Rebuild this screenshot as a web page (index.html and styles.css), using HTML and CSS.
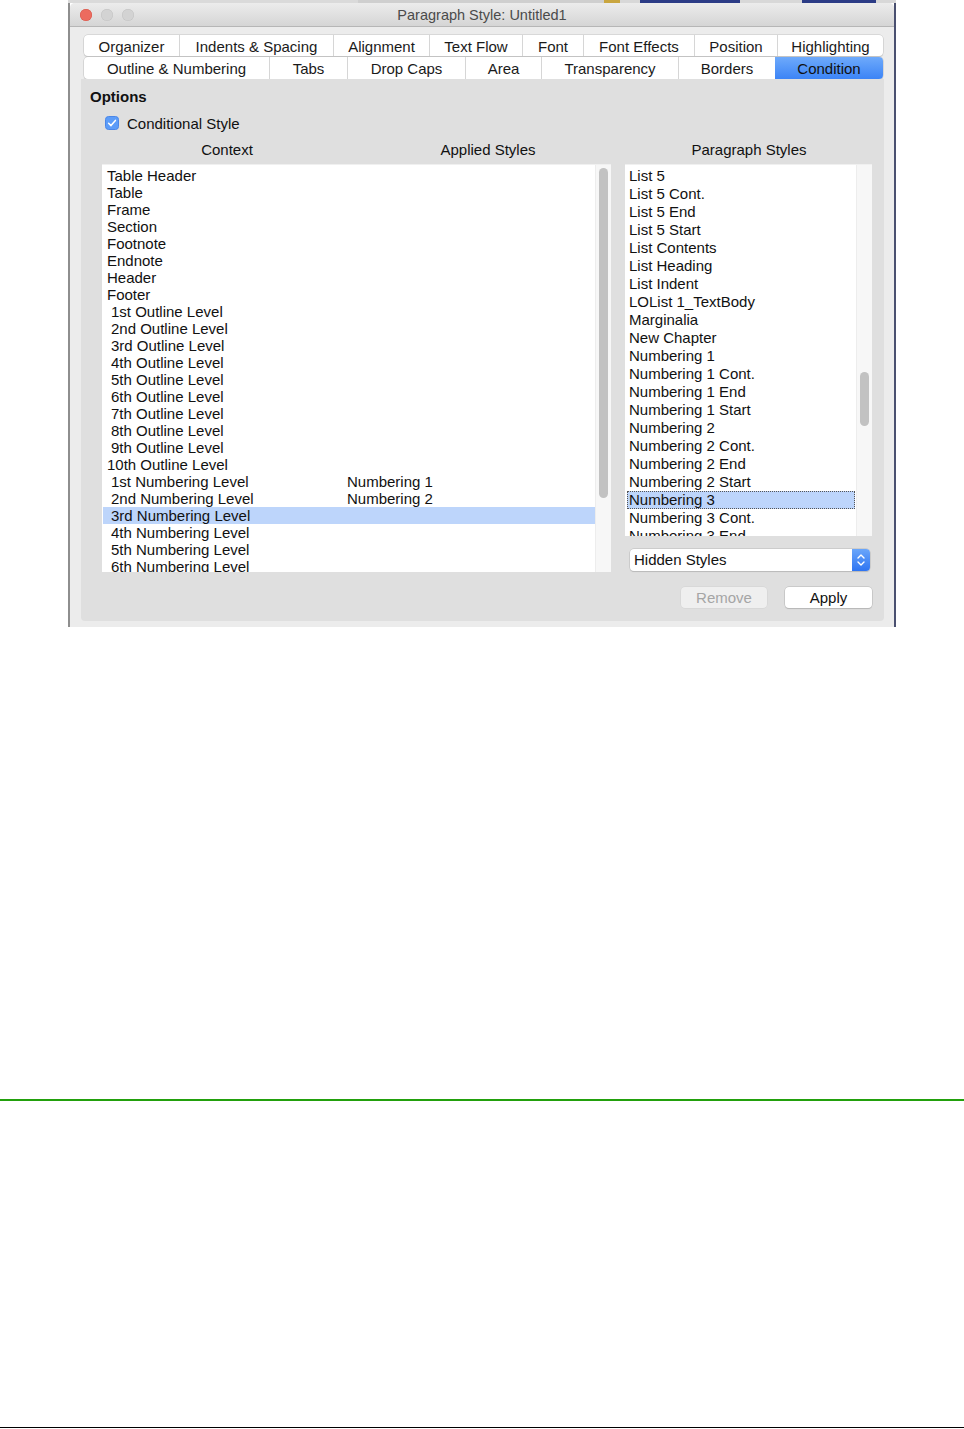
FILE: index.html
```html
<!DOCTYPE html>
<html>
<head>
<meta charset="utf-8">
<link rel="stylesheet" href="styles.css">
</head>
<body>
<div class="page">
  <div class="shot">
    <div class="desk">
      <span class="d1"></span><span class="d2"></span><span class="d3"></span><span class="d4"></span><span class="d5"></span>
    </div>
    <div class="frame">
      <div class="edge-l"></div>
      <div class="window">
        <div class="titlebar">
          <div class="lights"><span class="light red"></span><span class="light"></span><span class="light"></span></div>
          <div class="title">Paragraph Style: Untitled1</div>
          <div></div>
        </div>
        <div class="tabs">
          <div class="tabrow r1">
            <span>Organizer</span><span>Indents &amp; Spacing</span><span>Alignment</span><span>Text Flow</span><span>Font</span><span>Font Effects</span><span>Position</span><span>Highlighting</span>
          </div>
          <div class="tabrow r2">
            <span>Outline &amp; Numbering</span><span>Tabs</span><span>Drop Caps</span><span>Area</span><span>Transparency</span><span>Borders</span><span class="sel">Condition</span>
          </div>
        </div>
        <div class="panel">
          <div class="options">Options</div>
          <div class="checkrow">
            <svg class="check" width="14" height="14" viewBox="0 0 14 14"><rect x="0.5" y="0.5" width="13" height="13" rx="3" fill="#5c9cf8" stroke="#4a86e8"/><polyline points="3.6,7.2 6,9.6 10.4,4.4" fill="none" stroke="#fff" stroke-width="1.5" stroke-linecap="round" stroke-linejoin="round"/></svg>
            <span>Conditional Style</span>
          </div>
          <div class="heads">
            <span class="h1">Context</span><span class="h2">Applied Styles</span><span class="h3">Paragraph Styles</span>
          </div>
          <div class="lists">
            <div class="listbox left">
              <div class="rows">
                <div class="row"><span class="ctx">Table Header</span></div>
                <div class="row"><span class="ctx">Table</span></div>
                <div class="row"><span class="ctx">Frame</span></div>
                <div class="row"><span class="ctx">Section</span></div>
                <div class="row"><span class="ctx">Footnote</span></div>
                <div class="row"><span class="ctx">Endnote</span></div>
                <div class="row"><span class="ctx">Header</span></div>
                <div class="row"><span class="ctx">Footer</span></div>
                <div class="row"><span class="ctx in">1st Outline Level</span></div>
                <div class="row"><span class="ctx in">2nd Outline Level</span></div>
                <div class="row"><span class="ctx in">3rd Outline Level</span></div>
                <div class="row"><span class="ctx in">4th Outline Level</span></div>
                <div class="row"><span class="ctx in">5th Outline Level</span></div>
                <div class="row"><span class="ctx in">6th Outline Level</span></div>
                <div class="row"><span class="ctx in">7th Outline Level</span></div>
                <div class="row"><span class="ctx in">8th Outline Level</span></div>
                <div class="row"><span class="ctx in">9th Outline Level</span></div>
                <div class="row"><span class="ctx">10th Outline Level</span></div>
                <div class="row"><span class="ctx in">1st Numbering Level</span><span class="app">Numbering 1</span></div>
                <div class="row"><span class="ctx in">2nd Numbering Level</span><span class="app">Numbering 2</span></div>
                <div class="row hl"><span class="ctx in">3rd Numbering Level</span></div>
                <div class="row"><span class="ctx in">4th Numbering Level</span></div>
                <div class="row"><span class="ctx in">5th Numbering Level</span></div>
                <div class="row"><span class="ctx in">6th Numbering Level</span></div>
              </div>
              <div class="track"><div class="thumb tl"></div></div>
            </div>
            <div class="rightcol">
              <div class="listbox right">
                <div class="rows">
                  <div class="prow">List 5</div>
                  <div class="prow">List 5 Cont.</div>
                  <div class="prow">List 5 End</div>
                  <div class="prow">List 5 Start</div>
                  <div class="prow">List Contents</div>
                  <div class="prow">List Heading</div>
                  <div class="prow">List Indent</div>
                  <div class="prow">LOList 1_TextBody</div>
                  <div class="prow">Marginalia</div>
                  <div class="prow">New Chapter</div>
                  <div class="prow">Numbering 1</div>
                  <div class="prow">Numbering 1 Cont.</div>
                  <div class="prow">Numbering 1 End</div>
                  <div class="prow">Numbering 1 Start</div>
                  <div class="prow">Numbering 2</div>
                  <div class="prow">Numbering 2 Cont.</div>
                  <div class="prow">Numbering 2 End</div>
                  <div class="prow">Numbering 2 Start</div>
                  <div class="prow psel">Numbering 3</div>
                  <div class="prow">Numbering 3 Cont.</div>
                  <div class="prow">Numbering 3 End</div>
                </div>
                <div class="track"><div class="thumb tr"></div></div>
              </div>
              <div class="select">
                <span class="selval">Hidden Styles</span>
                <span class="stepper"><svg width="18" height="22" viewBox="0 0 18 22"><polyline points="6,9 9,6 12,9" fill="none" stroke="#fff" stroke-width="1.4" stroke-linecap="round" stroke-linejoin="round"/><polyline points="6,13 9,16 12,13" fill="none" stroke="#fff" stroke-width="1.4" stroke-linecap="round" stroke-linejoin="round"/></svg></span>
              </div>
              <div class="buttons">
                <span class="btn dis">Remove</span>
                <span class="btn">Apply</span>
              </div>
            </div>
          </div>
        </div>
      </div>
      <div class="edge-r"></div>
    </div>
  </div>
  <div class="green"></div>
  <div class="black"></div>
</div>
</body>
</html>
```
FILE: styles.css
```css
html, body {
  margin: 0;
  padding: 0;
  background: #fff;
}
body {
  font-family: "Liberation Sans", Arial, Helvetica, sans-serif;
  font-size: 15px;
  color: #111;
}
.page {
  width: 964px;
  height: 1429px;
  overflow: hidden;
}
.shot {
  margin-left: 68px;
  width: 828px;
  height: 627px;
  display: flex;
  flex-direction: column;
}
.desk {
  height: 3px;
  display: flex;
  background: #d8d8d8;
}
.desk span { display: block; height: 3px; }
.desk .d1 { width: 290px; background: #dadada; }
.desk .d2 { width: 246px; background: #cfcfcf; }
.desk .d3 { width: 16px; background: #c9a640; }
.desk .d4 { width: 100px; background: #2c3c86; margin-left: 20px; }
.desk .d5 { width: 74px; background: #2c3c86; margin-left: 62px; }
.frame {
  flex: 1;
  display: flex;
}
.edge-l {
  width: 2px;
  background: #8e8e8e;
}
.edge-r {
  width: 2px;
  background: #4a5070;
}
.window {
  width: 824px;
  background: #ececec;
  border-radius: 5px 5px 0 0;
  display: flex;
  flex-direction: column;
  overflow: hidden;
}
.titlebar {
  height: 23px;
  border-bottom: 1px solid #b6b6b6;
  background: linear-gradient(#ececec, #d5d5d5);
  display: grid;
  grid-template-columns: 1fr auto 1fr;
  align-items: center;
}
.lights {
  display: flex;
  gap: 9px;
  padding-left: 10px;
}
.light {
  width: 12px;
  height: 12px;
  border-radius: 50%;
  background: #d3d3d3;
  box-shadow: inset 0 0 0 0.5px #c2c2c2;
}
.light.red {
  background: #ec6b5f;
  box-shadow: inset 0 0 0 0.5px #d65447;
}
.title {
  font-size: 14.5px;
  color: #4b4b4b;
}
.tabs {
  padding: 8px 0 0 14px;
  display: flex;
  flex-direction: column;
  gap: 1px;
}
.tabrow {
  width: 799px;
  height: 21px;
  display: flex;
  background: #fff;
  border-radius: 4px;
  box-shadow: 0 0 0 0.5px #c4c4c4, 0 1px 1px #bdbdbd;
  overflow: hidden;
}
.tabrow span {
  flex: none;
  text-align: center;
  line-height: 23px;
  border-left: 1px solid #d6d6d6;
  box-sizing: border-box;
  color: #1a1a1a;
}
.tabrow span:first-child { border-left: none; }
.r1 span:nth-child(1) { width: 95px; }
.r1 span:nth-child(2) { width: 154px; }
.r1 span:nth-child(3) { width: 96px; }
.r1 span:nth-child(4) { width: 93px; }
.r1 span:nth-child(5) { width: 61px; }
.r1 span:nth-child(6) { width: 111px; }
.r1 span:nth-child(7) { width: 83px; }
.r1 span:nth-child(8) { width: 106px; }
.r2 span:nth-child(1) { width: 185px; }
.r2 span:nth-child(2) { width: 78px; }
.r2 span:nth-child(3) { width: 118px; }
.r2 span:nth-child(4) { width: 76px; }
.r2 span:nth-child(5) { width: 137px; }
.r2 span:nth-child(6) { width: 97px; }
.r2 span:nth-child(7) { width: 108px; }
.r2 { height: 22px; }
.r2 span { line-height: 24px; }
.tabrow .sel {
  background: linear-gradient(#6eaafb, #3c84f6);
  color: #111;
  border-left: none;
}
.panel {
  margin: 0 10px 0 11px;
  height: 542px;
  background: #dfdfdf;
  border-radius: 0 0 4px 4px;
  padding: 9px 0 0 9px;
  box-sizing: border-box;
  display: flex;
  flex-direction: column;
}
.options {
  font-weight: bold;
  line-height: 18px;
  color: #111;
}
.checkrow {
  margin-top: 8px;
  margin-left: 15px;
  display: flex;
  align-items: center;
  gap: 8px;
  height: 18px;
}
.check { display: block; flex: none; }
.heads {
  margin-top: 9px;
  margin-left: 12px;
  display: flex;
  line-height: 18px;
}
.heads span { text-align: center; flex: none; }
.heads .h1 { width: 250px; }
.heads .h2 { width: 272px; }
.heads .h3 { width: 250px; }
.lists {
  margin-top: 5px;
  margin-left: 12px;
  display: flex;
  gap: 14px;
  align-items: flex-start;
}
.listbox {
  background: #fff;
  border-top: 1px solid #f0f0f0;
  display: flex;
  overflow: hidden;
  box-sizing: border-box;
}
.listbox.left {
  width: 509px;
  height: 408px;
}
.rows {
  flex: 1;
  padding-top: 2px;
  overflow: hidden;
}
.row {
  height: 17px;
  line-height: 17px;
  display: flex;
  padding-left: 4px;
  margin-left: 1px;
  white-space: nowrap;
}
.row.hl { background: #bdd5fb; }
.ctx {
  width: 240px;
  flex: none;
}
.ctx.in { padding-left: 4px; box-sizing: border-box; }
.track {
  width: 16px;
  flex: none;
  background: #f7f7f7;
  border-left: 1px solid #ededed;
  box-sizing: border-box;
  position: relative;
}
.thumb {
  position: absolute;
  left: 3px;
  width: 9px;
  background: #c2c2c2;
  border-radius: 5px;
}
.thumb.tl { top: 3px; height: 330px; }
.thumb.tr { top: 207px; height: 54px; }
.rightcol {
  width: 247px;
  display: flex;
  flex-direction: column;
}
.listbox.right {
  height: 372px;
}
.prow {
  height: 18px;
  line-height: 18px;
  padding-left: 3px;
  margin-left: 1px;
  white-space: nowrap;
  box-sizing: border-box;
}
.prow.psel {
  background: #bdd5fb;
  outline: 1px dotted #555;
  outline-offset: -1px;
  padding-left: 2px;
  margin-left: 2px;
  margin-right: 1px;
}
.select {
  margin-top: 13px;
  margin-left: 5px;
  width: 240px;
  height: 22px;
  background: #fff;
  border-radius: 4px;
  box-shadow: 0 0 0 0.5px #b9b9b9, 0 1px 1px #bcbcbc;
  display: flex;
  align-items: center;
  overflow: hidden;
}
.selval {
  flex: 1;
  padding-left: 4px;
  line-height: 22px;
}
.stepper {
  width: 18px;
  height: 22px;
  background: linear-gradient(#6aa6fa, #2e74f2);
  display: block;
}
.stepper svg { display: block; }
.buttons {
  margin-top: 16px;
  display: flex;
  justify-content: flex-end;
  gap: 18px;
}
.btn {
  height: 21px;
  line-height: 21px;
  text-align: center;
  background: #fff;
  border-radius: 4px;
  box-shadow: 0 0 0 0.5px #b5b5b5, 0 1px 1px #b9b9b9;
  color: #111;
  width: 87px;
}
.btn.dis {
  width: 86px;
  background: #efefef;
  color: #a5a5a5;
  box-shadow: 0 0 0 0.5px #d2d2d2;
}
.green {
  margin-top: 472px;
  height: 2px;
  background: #22a00c;
}
.black {
  margin-top: 326px;
  height: 1px;
  background: #000;
}
```
